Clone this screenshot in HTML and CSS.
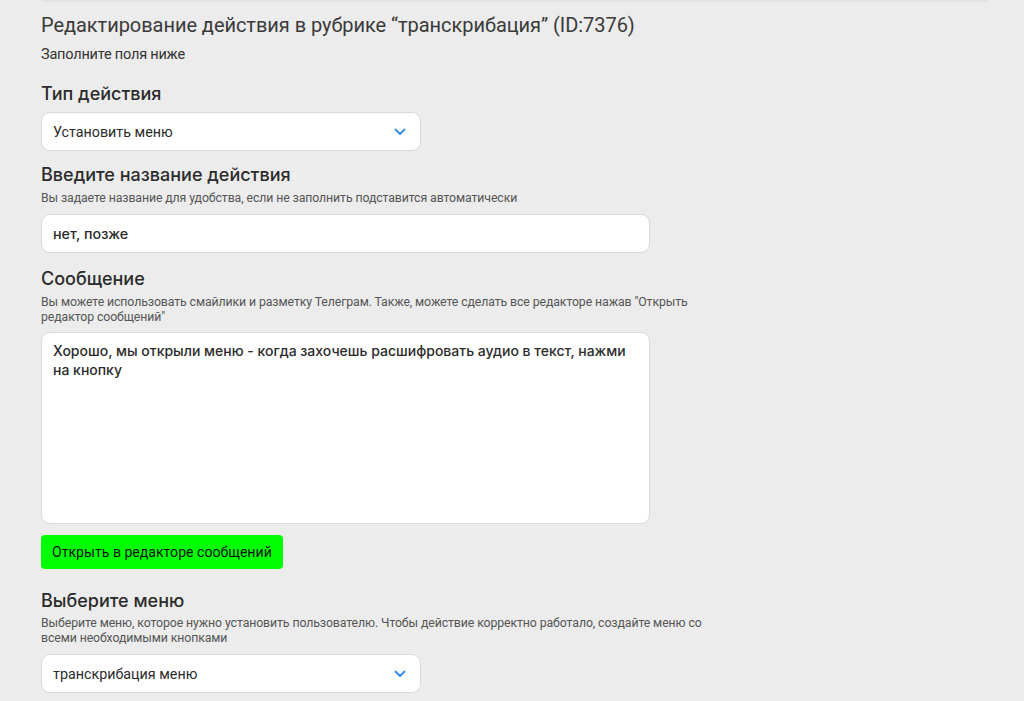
FILE: index.html
```html
<!DOCTYPE html>
<html lang="ru">
<head>
<meta charset="utf-8">
<link rel="stylesheet" href="styles.css">
</head>
<body>
<div class="topline"></div>
<main class="page">
  <h1 class="title">Редактирование действия в рубрике “транскрибация” (ID:7376)</h1>
  <p class="subtitle">Заполните поля ниже</p>

  <section class="field">
    <h2 class="label">Тип действия</h2>
    <div class="select">
      <span>Установить меню</span>
      <svg class="chev" width="12" height="8" viewBox="0 0 12 8"><path d="M1.5 1.5 L6 6 L10.5 1.5" fill="none" stroke="#2f8ae8" stroke-width="1.8" stroke-linecap="round" stroke-linejoin="round"/></svg>
    </div>
  </section>

  <section class="field">
    <h2 class="label">Введите название действия</h2>
    <p class="hint">Вы задаете название для удобства, если не заполнить подставится автоматически</p>
    <div class="input">нет, позже</div>
  </section>

  <section class="field field-msg">
    <h2 class="label">Сообщение</h2>
    <p class="hint">Вы можете использовать смайлики и разметку Телеграм. Также, можете сделать все редакторе нажав "Открыть редактор сообщений"</p>
    <div class="textarea">Хорошо, мы открыли меню - когда захочешь расшифровать аудио в текст, нажми на кнопку</div>
    <button class="btn">Открыть в редакторе сообщений</button>
  </section>

  <section class="field field-last">
    <h2 class="label">Выберите меню</h2>
    <p class="hint">Выберите меню, которое нужно установить пользователю. Чтобы действие корректно работало, создайте меню со всеми необходимыми кнопками</p>
    <div class="select">
      <span>транскрибация меню</span>
      <svg class="chev" width="12" height="8" viewBox="0 0 12 8"><path d="M1.5 1.5 L6 6 L10.5 1.5" fill="none" stroke="#2f8ae8" stroke-width="1.8" stroke-linecap="round" stroke-linejoin="round"/></svg>
    </div>
  </section>
</main>
</body>
</html>
```

FILE: styles.css
```css
html, body {
  margin: 0;
  padding: 0;
  background: #ececec;
}
body {
  font-family: Roboto, "Liberation Sans", sans-serif;
  color: #333;
  overflow: hidden;
}
.topline {
  margin-left: 42px;
  width: 946px;
  height: 2px;
  background: #e3e3e3;
}
.page {
  padding-left: 41px;
  width: 690px;
}
.title {
  margin: 11px 0 0;
  font-family: Roboto, sans-serif;
  font-weight: 400;
  font-size: 20px;
  line-height: 24px;
  color: #3a3a3a;
  letter-spacing: -0.05px;
}
.subtitle {
  margin: 10px 0 0;
  font-size: 14.5px;
  line-height: 16px;
  color: #333;
  letter-spacing: -0.2px;
}
.field {
  margin-top: 20px;
}
.field + .field {
  margin-top: 13px;
}
.field + .field-msg {
  margin-top: 15px;
}
.field + .field-last {
  margin-top: 21px;
}
.label {
  margin: 0;
  font-family: Inter, sans-serif;
  font-weight: 500;
  font-size: 18px;
  line-height: 22px;
  color: #2b2b2b;
}
.hint {
  margin: 5px 0 0;
  font-size: 12.3px;
  line-height: 15px;
  color: #555;
  letter-spacing: -0.1px;
}
.field-last .hint {
  margin-top: 4px;
}
.select, .input, .textarea {
  box-sizing: border-box;
  background: #fff;
  border: 1px solid #d9d9d9;
  border-radius: 9px;
  font-family: Inter, sans-serif;
  color: #2b2b2b;
}
.select {
  margin-top: 7px;
  width: 380px;
  height: 39px;
  display: flex;
  align-items: center;
  justify-content: space-between;
  padding: 0 14px 0 11px;
  font-family: Roboto, sans-serif;
  font-size: 14.3px;
}
.hint + .select {
  margin-top: 8px;
}
.input {
  margin-top: 8px;
  width: 609px;
  height: 39px;
  display: flex;
  align-items: center;
  padding: 0 11px;
  font-size: 14.3px;
  font-weight: 500;
}
.textarea {
  margin-top: 7px;
  width: 609px;
  height: 192px;
  padding: 8px 11px;
  font-size: 14px;
  font-weight: 500;
  line-height: 19px;
}
.btn {
  display: block;
  margin-top: 11px;
  height: 34px;
  padding: 0 11px;
  border: none;
  border-radius: 4px;
  background: #00ff00;
  font-family: Roboto, sans-serif;
  font-size: 14.1px;
  color: #111;
}
.chev {
  display: block;
}
```
